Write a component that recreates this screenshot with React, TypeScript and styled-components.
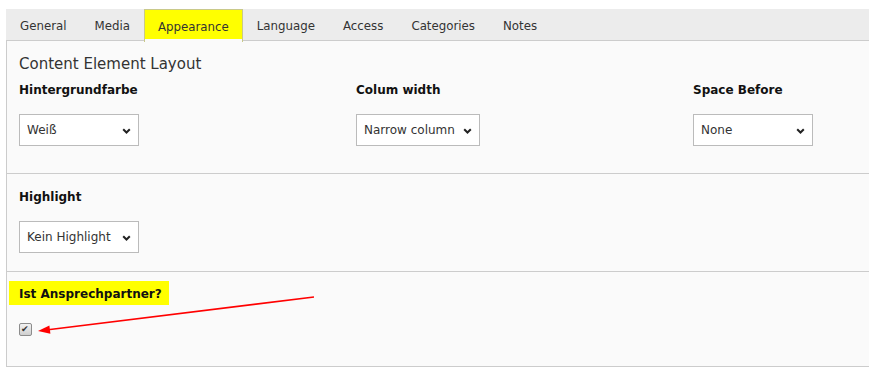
import styled, { createGlobalStyle, css } from "styled-components";

const GlobalStyle = createGlobalStyle`
    html, body {
        margin: 0;
        padding: 0;
        background: #fff;
        overflow: hidden;
    }
    body {
        font-family: "DejaVu Sans", Verdana, sans-serif;
        font-size: 12px;
        color: #333;
    }
`;

const Page = styled.div`
    position: relative;
    width: 869px;
    height: 367px;
    padding: 9px 0 0 6px;
    box-sizing: border-box;
    overflow: hidden;
`;

const TabBar = styled.ul`
    display: flex;
    margin: 0;
    padding: 0;
    list-style: none;
    height: 31px;
    background: #ececec;
    border-bottom: 1px solid #ccc;
`;

const Tab = styled.li<{ $active?: boolean }>`
    display: flex;
    align-items: center;
    padding: 1px 13px 0;
    border: 1px solid transparent;
    border-bottom: none;
    font-size: 11.8px;
    color: #333;
    white-space: nowrap;
    ${(p) =>
        p.$active &&
        css`
            background: #ffff00;
            border-color: #c9c98a;
            height: 31px;
            box-shadow: inset 0 -3px 0 #fafafa;
        `}
`;

const Panel = styled.div`
    background: #fafafa;
    border-left: 1px solid #ccc;
    border-bottom: 1px solid #ccc;
    width: 1100px;
`;

const Section = styled.section<{ $top: number; $bottom: number }>`
    padding: ${(p) => p.$top}px 13px ${(p) => p.$bottom}px 12px;
    & + & {
        border-top: 1px solid #ccc;
    }
`;

const Title = styled.h3`
    margin: 0 0 10px;
    font-size: 15px;
    line-height: 18px;
    font-weight: normal;
    color: #333;
`;

const Grid = styled.div`
    display: grid;
    grid-template-columns: repeat(3, 337px);
`;

const Field = styled.div`
    display: flex;
    flex-direction: column;
    align-items: flex-start;
`;

const Label = styled.label`
    display: block;
    font-weight: bold;
    font-size: 12px;
    line-height: 15px;
    color: #111;
    margin-bottom: 16px;
`;

const MarkedLabel = styled.label`
    display: inline-block;
    height: 24px;
    box-sizing: border-box;
    padding: 4px 7px 0 10px;
    margin-left: -10px;
    background: #ffff00;
    font-weight: bold;
    font-size: 12px;
    line-height: 18px;
    color: #111;
`;

const SelectWrap = styled.div<{ $w: number }>`
    position: relative;
    width: ${(p) => p.$w}px;
    height: 32px;
`;

const Select = styled.select`
    appearance: none;
    width: 100%;
    height: 100%;
    margin: 0;
    padding: 0 20px 0 7px;
    border: 1px solid #bbb;
    border-radius: 0;
    background: #fff;
    font-family: inherit;
    font-size: 12px;
    color: #333;
`;

const Chevron = styled.svg`
    position: absolute;
    right: 8px;
    top: 14px;
    width: 9px;
    height: 6px;
    pointer-events: none;
`;

const CheckRow = styled.div`
    margin-top: 18px;
    height: 13px;
`;

const Checkbox = styled.input`
    appearance: none;
    position: relative;
    width: 13px;
    height: 13px;
    margin: 0;
    border: 1px solid #8c8c8c;
    border-radius: 2px;
    background: linear-gradient(#f2f2f2, #cfcfcf);
    &::after {
        content: "✔";
        position: absolute;
        left: 1px;
        top: -1px;
        font-size: 9px;
        line-height: 13px;
        color: #333;
    }
`;

const Annotation = styled.svg`
    position: absolute;
    top: 0;
    left: 0;
    width: 869px;
    height: 367px;
    pointer-events: none;
`;

const tabs = ["General", "Media", "Appearance", "Language", "Access", "Categories", "Notes"];

const Dropdown = ({ value, width }: { value: string; width: number }) => (
    <SelectWrap $w={width}>
        <Select defaultValue={value}>
            <option>{value}</option>
        </Select>
        <Chevron viewBox="0 0 9 6">
            <path d="M1.2 1.2 L4.5 4.5 L7.8 1.2" fill="none" stroke="#222" strokeWidth="2" />
        </Chevron>
    </SelectWrap>
);

export default function App() {
    return (
        <Page>
            <GlobalStyle />
            <TabBar>
                {tabs.map((t) => (
                    <Tab key={t} $active={t === "Appearance"}>
                        {t}
                    </Tab>
                ))}
            </TabBar>
            <Panel>
                <Section $top={14} $bottom={27}>
                    <Title>Content Element Layout</Title>
                    <Grid>
                        <Field>
                            <Label>Hintergrundfarbe</Label>
                            <Dropdown value="Weiß" width={120} />
                        </Field>
                        <Field>
                            <Label>Colum width</Label>
                            <Dropdown value="Narrow column" width={124} />
                        </Field>
                        <Field>
                            <Label>Space Before</Label>
                            <Dropdown value="None" width={120} />
                        </Field>
                    </Grid>
                </Section>
                <Section $top={16} $bottom={18}>
                    <Field>
                        <Label>Highlight</Label>
                        <Dropdown value="Kein Highlight" width={120} />
                    </Field>
                </Section>
                <Section $top={9} $bottom={30}>
                    <MarkedLabel>Ist Ansprechpartner?</MarkedLabel>
                    <CheckRow>
                        <Checkbox type="checkbox" defaultChecked />
                    </CheckRow>
                </Section>
            </Panel>
            <Annotation viewBox="0 0 869 367">
                <line x1="314" y1="297" x2="48" y2="329.7" stroke="#ff0000" strokeWidth="1.6" />
                <polygon points="38,331 50.4,333.8 49.4,325.4" fill="#ff0000" />
            </Annotation>
        </Page>
    );
}
